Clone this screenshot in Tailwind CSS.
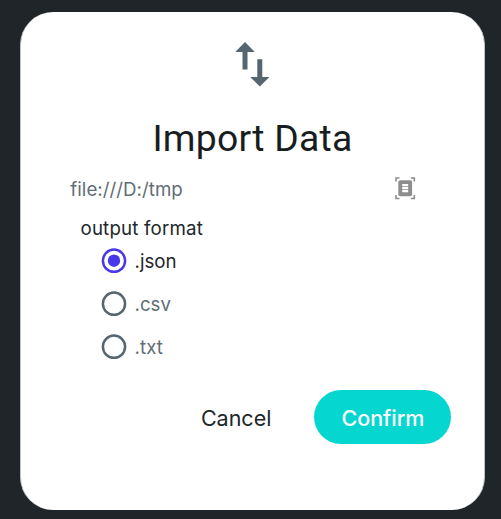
<!DOCTYPE html>
<html lang="en">
<head>
<meta charset="utf-8">
<title>Import Data</title>
<script src="https://cdn.jsdelivr.net/npm/@tailwindcss/browser@4"></script>
</head>
<body class="h-[519px] overflow-hidden bg-[#1f2529] pt-3 pl-5 font-['Inter',sans-serif]">
<main class="flex h-[498px] w-[465px] flex-col rounded-[33px] border-x border-[#bcc3c5] bg-white text-[#171d20]">
  <svg class="mt-[29px] ml-[214px] h-[47px] w-[36px] shrink-0" viewBox="0 0 36 47" fill="#566670"><path d="M10 1 L19.8 11 H12.5 V28.5 H7.5 V11 H0.3Z M22.3 18.3 H27.3 V36 H34.5 L24.8 45.5 L15.2 36 H22.3Z"/></svg>
  <h1 class="mt-[28px] h-[44px] text-center font-['Roboto',sans-serif] text-[37.3px] leading-[44px] tracking-[0.25px] whitespace-nowrap">Import Data</h1>
  <div class="mt-[17px] flex h-6 items-center justify-between pr-[68px] pl-[49.3px]">
    <span class="pt-[2px] text-[18.7px] leading-6 tracking-[0.04px] text-[#5f6e77]">file:///D:/tmp</span>
    <svg class="mt-[-2px] h-[24px] w-[21px]" viewBox="0 0 21 24" fill="none"><path d="M1 5.5V2H4.5 M15.8 2H19.3V5.5 M1 19V22.5H4.5 M15.8 22.5H19.3V19" stroke="#8d8d8d" stroke-width="1.6"/><rect x="3.3" y="4.3" width="13.8" height="16" rx="2" fill="#8d8d8d"/><path d="M7.2 9.2H13.2M7.2 12.2H13.2M7.2 15.2H13.2" stroke="#fff" stroke-width="2.2"/></svg>
  </div>
  <fieldset class="mt-[16px] pl-[59.5px] text-[18.7px] leading-6">
    <legend class="h-6 tracking-[0.18px] text-[#20272a]">output format</legend>
    <div class="flex flex-col gap-[19px] pt-[8px] pl-5">
      <label class="flex h-6 items-center gap-[8px] text-[#20272a]"><svg class="size-[26px]" viewBox="0 0 26 26"><circle cx="13" cy="12.7" r="11.1" fill="none" stroke="#4938e9" stroke-width="2.5"/><circle cx="13" cy="12.7" r="6.2" fill="#4938e9"/></svg><span class="pt-[2px]">.json</span></label>
      <label class="flex h-6 items-center gap-[8px] text-[#5f6e77]"><svg class="size-[26px]" viewBox="0 0 26 26"><circle cx="13" cy="12.7" r="11.1" fill="none" stroke="#566670" stroke-width="2.5"/></svg><span class="pt-[2px]">.csv</span></label>
      <label class="flex h-6 items-center gap-[8px] text-[#5f6e77]"><svg class="size-[26px]" viewBox="0 0 26 26"><circle cx="13" cy="12.7" r="11.1" fill="none" stroke="#566670" stroke-width="2.5"/></svg><span class="pt-[2px] tracking-[0.1px]">.txt</span></label>
    </div>
  </fieldset>
  <div class="mt-[31px] flex h-[54px] items-center justify-end pr-[32.6px]">
    <button class="mr-[43px] pt-[2px] text-[21.5px] leading-[54px] text-[#20272a]">Cancel</button>
    <button class="h-[54px] w-[137px] rounded-full bg-[#06d6d0] pt-[2px] text-[21.5px] font-medium text-white">Confirm</button>
  </div>
</main>
</body>
</html>
